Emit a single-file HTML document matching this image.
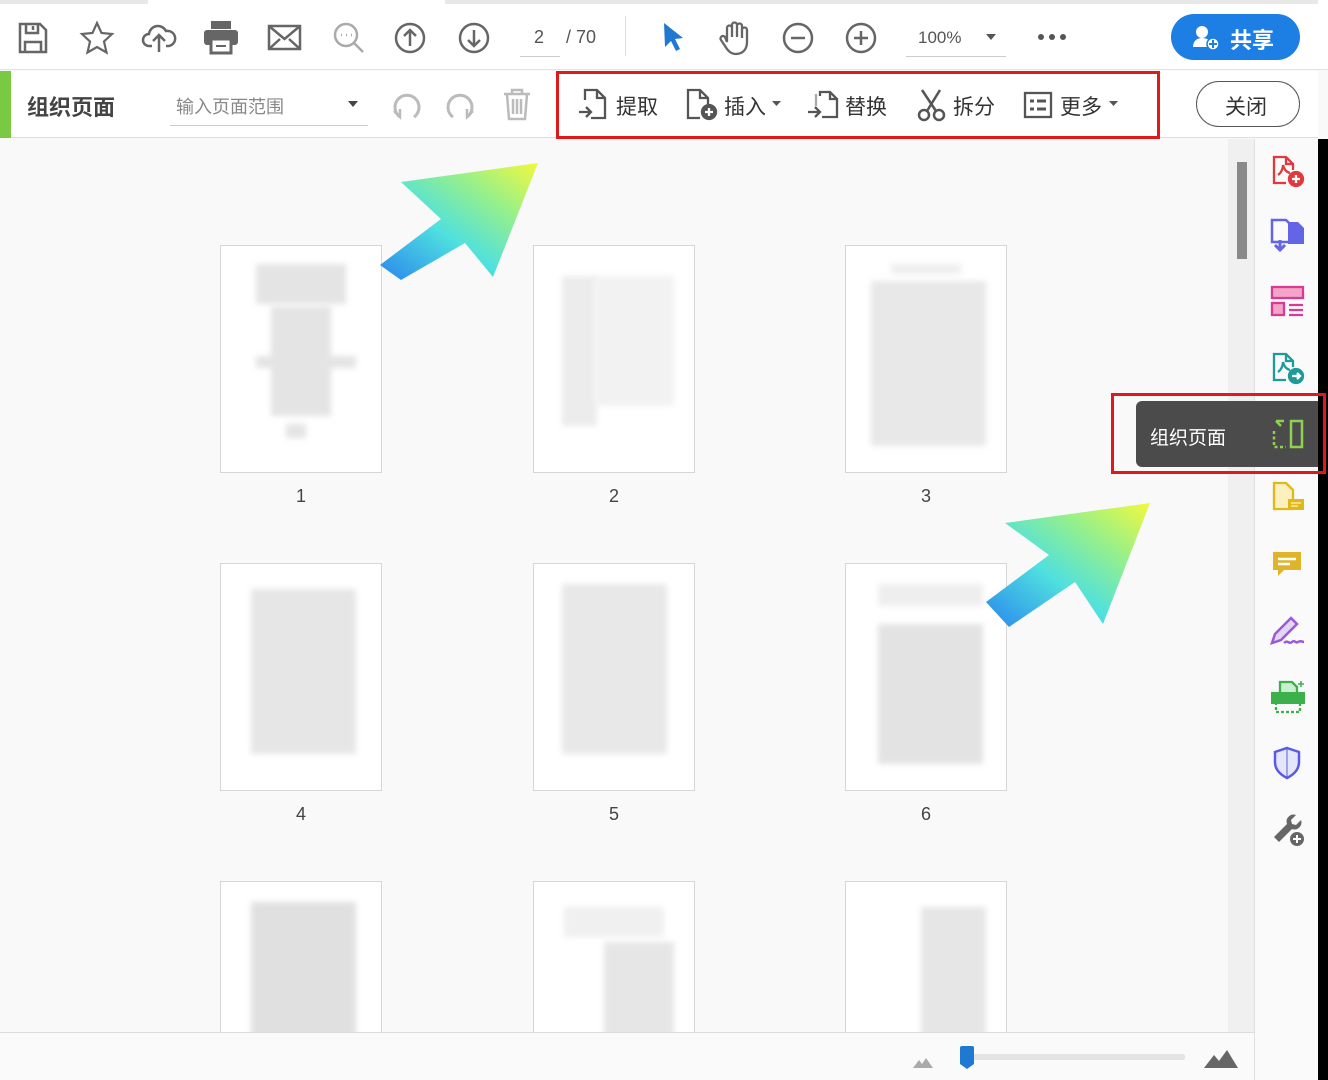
<!DOCTYPE html>
<html><head><meta charset="utf-8"><style>
*{margin:0;padding:0;box-sizing:border-box}
html,body{width:1328px;height:1080px;overflow:hidden}
body{background:#f9f9f9;font-family:"Liberation Sans","Noto Sans CJK SC",sans-serif;position:relative;color:#444}
.abs{position:absolute}
.tb{left:0;top:0;width:1328px;height:70px;background:#fff;border-bottom:1px solid #e2e2e2}
.bar2{left:0;top:71px;width:1318px;height:67px;background:#fff;border-bottom:1px solid #ddd}
.thumb{position:absolute;width:162px;height:228px;background:#fff;border:1px solid #d6d6d6;overflow:hidden}
.lbl{position:absolute;width:162px;text-align:center;font-size:18px;color:#444}
.blk{position:absolute;background:#e4e4e4;filter:blur(3px)}
.red{position:absolute;border:3px solid #e0191c}
svg{position:absolute;overflow:visible}
.t{position:absolute;font-size:20px;color:#333}
#content{position:absolute;left:0;top:0;width:1228px;height:1032px;overflow:hidden}
</style></head><body>
<div id="content">
<div class="thumb" style="left:220px;top:245px"><div class="blk" style="left:35px;top:18px;width:90px;height:40px"></div><div class="blk" style="left:50px;top:60px;width:60px;height:110px"></div><div class="blk" style="left:35px;top:110px;width:100px;height:12px"></div><div class="blk" style="left:65px;top:178px;width:20px;height:14px"></div></div>
<div class="thumb" style="left:533px;top:245px"><div class="blk" style="left:28px;top:30px;width:35px;height:150px;background:#ececec"></div><div class="blk" style="left:60px;top:30px;width:80px;height:130px;background:#f2f2f2"></div></div>
<div class="thumb" style="left:845px;top:245px"><div class="blk" style="left:25px;top:35px;width:115px;height:165px;background:#e8e8e8"></div><div class="blk" style="left:45px;top:18px;width:70px;height:10px;background:#eee"></div></div>
<div class="lbl" style="left:220px;top:486px">1</div><div class="lbl" style="left:533px;top:486px">2</div><div class="lbl" style="left:845px;top:486px">3</div>
<div class="thumb" style="left:220px;top:563px"><div class="blk" style="left:30px;top:25px;width:105px;height:165px;background:#e6e6e6"></div></div>
<div class="thumb" style="left:533px;top:563px"><div class="blk" style="left:28px;top:20px;width:105px;height:170px;background:#e8e8e8"></div></div>
<div class="thumb" style="left:845px;top:563px"><div class="blk" style="left:32px;top:20px;width:105px;height:22px;background:#eee"></div><div class="blk" style="left:32px;top:60px;width:105px;height:140px;background:#e3e3e3"></div></div>
<div class="lbl" style="left:220px;top:804px">4</div><div class="lbl" style="left:533px;top:804px">5</div><div class="lbl" style="left:845px;top:804px">6</div>
<div class="thumb" style="left:220px;top:881px"><div class="blk" style="left:30px;top:20px;width:105px;height:140px;background:#e0e0e0"></div></div>
<div class="thumb" style="left:533px;top:881px"><div class="blk" style="left:70px;top:60px;width:70px;height:100px;background:#e6e6e6"></div><div class="blk" style="left:30px;top:25px;width:100px;height:30px;background:#f0f0f0"></div></div>
<div class="thumb" style="left:845px;top:881px"><div class="blk" style="left:75px;top:25px;width:65px;height:130px;background:#e6e6e6"></div></div>
</div>

<div class="abs tb"></div>
<div class="abs" style="left:0;top:0;width:148px;height:4px;background:#e8e8e8"></div>
<div class="abs" style="left:445px;top:0;width:873px;height:4px;background:#e8e8e8"></div>
<svg style="left:18px;top:22px" width="30" height="32" fill="none" stroke="#666" stroke-width="2.5"><path d="M2 2h20l6 6v22H2z"/><path d="M8 2v9h12V2M15 4v4M7 30V20h16v10"/></svg>
<svg style="left:80px;top:21px" width="34" height="34" fill="none" stroke="#666" stroke-width="2.2"><path d="M17 2l4.5 10 10.5 1-8 7.5 2.5 11L17 26l-9.5 5.5 2.5-11L2 13l10.5-1z"/></svg>
<svg style="left:142px;top:22px" width="34" height="32" fill="none" stroke="#666" stroke-width="2.5"><path d="M10 24H7a6 6 0 0 1 0-12 9 9 0 0 1 17-3 7 7 0 0 1 3 15h-3M17 30V14M11 19l6-6 6 6"/></svg>
<svg style="left:204px;top:21px" width="34" height="32" fill="#666"><rect x="7" y="0" width="20" height="8"/><rect x="0" y="9" width="34" height="15" rx="3"/><rect x="7" y="18" width="20" height="14" fill="#fff" stroke="#666" stroke-width="3"/><rect x="12" y="24" width="10" height="2"/></svg>
<svg style="left:268px;top:25px" width="34" height="26" fill="none" stroke="#666" stroke-width="2.5"><rect x="1" y="1" width="31" height="23"/><path d="M1 1l15.5 13L32 1M1 24l11-10M32 24L21 14"/></svg>
<svg style="left:332px;top:21px" width="34" height="34" fill="none" stroke="#aaa" stroke-width="2.5"><circle cx="14" cy="14" r="11"/><path d="M22 22l9 9"/><path d="M9 14h1M14 14h1M19 14h1" stroke-width="2.5"/></svg>
<svg style="left:394px;top:22px" width="32" height="32" fill="none" stroke="#666" stroke-width="2.5"><circle cx="16" cy="16" r="14"/><path d="M16 24V9M10 14l6-6 6 6"/></svg>
<svg style="left:458px;top:22px" width="32" height="32" fill="none" stroke="#666" stroke-width="2.5"><circle cx="16" cy="16" r="14"/><path d="M16 8v15M10 18l6 6 6-6"/></svg>
<div class="t" style="left:534px;top:27px;font-size:18px;color:#555">2</div>
<div class="abs" style="left:520px;top:56px;width:40px;height:1px;background:#ccc"></div>
<div class="t" style="left:566px;top:27px;font-size:18px;color:#555">/ 70</div>
<div class="abs" style="left:625px;top:16px;width:1px;height:40px;background:#ddd"></div>
<svg style="left:663px;top:22px" width="22" height="30" fill="#1f78d1"><path d="M1 1l19 15-8 1 5 10-4 2-5-10-6 6z"/></svg>
<svg style="left:718px;top:20px" width="34" height="36" fill="none" stroke="#666" stroke-width="2.3"><path d="M9 22V8a2.5 2.5 0 0 1 5 0v9V5a2.5 2.5 0 0 1 5 0v12V6a2.5 2.5 0 0 1 5 0v12V10a2.5 2.5 0 0 1 5 0v12c0 7-4 12-11 12-5 0-8-3-11-8l-4-6a2.5 2.5 0 0 1 4-3z"/></svg>
<svg style="left:782px;top:22px" width="32" height="32" fill="none" stroke="#666" stroke-width="2.5"><circle cx="16" cy="16" r="14"/><path d="M9 16h14"/></svg>
<svg style="left:845px;top:22px" width="32" height="32" fill="none" stroke="#666" stroke-width="2.5"><circle cx="16" cy="16" r="14"/><path d="M9 16h14M16 9v14"/></svg>
<div class="t" style="left:918px;top:28px;font-size:17px;color:#555">100%</div>
<div class="abs" style="left:906px;top:56px;width:100px;height:1px;background:#ccc"></div>
<svg style="left:986px;top:34px" width="10" height="6" fill="#555"><path d="M0 0h10L5 6z"/></svg>
<svg style="left:1038px;top:34px" width="30" height="6" fill="#555"><circle cx="3" cy="3" r="3"/><circle cx="14" cy="3" r="3"/><circle cx="25" cy="3" r="3"/></svg>
<div class="abs" style="left:1171px;top:14px;width:129px;height:46px;border-radius:23px;background:#1d7ee4"></div>
<svg style="left:1193px;top:25px" width="28" height="26" fill="#fff"><circle cx="9" cy="7" r="6"/><path d="M0 22c0-6 4-9 9-9s7 2 8 4v5z"/><circle cx="20" cy="19" r="6" stroke="#1d7ee4" stroke-width="1.5"/><path d="M20 15v8M16 19h8" stroke="#1d7ee4" stroke-width="2"/></svg>
<div class="t" style="left:1230px;top:23px;font-size:22px;color:#fff;font-weight:bold">共享</div>

<div class="abs bar2"></div>
<div class="abs" style="left:0;top:71px;width:11px;height:67px;background:#7ac943"></div>
<div class="t" style="left:27px;top:90px;font-size:22px;font-weight:bold;color:#444">组织页面</div>
<div class="t" style="left:176px;top:93px;font-size:18px;color:#888">输入页面范围</div>
<div class="abs" style="left:170px;top:125px;width:198px;height:1px;background:#ccc"></div>
<svg style="left:348px;top:101px" width="10" height="6" fill="#444"><path d="M0 0h10L5 6z"/></svg>
<svg style="left:390px;top:89px" width="32" height="32" fill="none" stroke="#bbb" stroke-width="3"><path d="M10 28a12 12 0 1 1 14 0"/><path d="M4 22l6 6 0-8" stroke-width="2.5"/></svg>
<svg style="left:445px;top:89px" width="32" height="32" fill="none" stroke="#bbb" stroke-width="3"><path d="M22 28a12 12 0 1 0-14 0"/><path d="M28 22l-6 6 0-8" stroke-width="2.5"/></svg>
<svg style="left:503px;top:88px" width="28" height="32" fill="none" stroke="#bbb" stroke-width="2.5"><path d="M1 6h26M9 6V2h10v4M4 6l2 25h16l2-25M10 11v15M14 11v15M18 11v15"/></svg>
<svg style="left:577px;top:88px" width="30" height="32" fill="none" stroke="#555" stroke-width="2.3"><path d="M8 12V2h12l8 8v20H14"/><path d="M20 2v8h8M2 24h12M9 19l5 5-5 5"/></svg>
<div class="t" style="left:616px;top:91px;font-size:21px">提取</div>
<svg style="left:686px;top:88px" width="34" height="34" fill="none" stroke="#555" stroke-width="2.3"><path d="M14 30H2V2h12l8 8v6M14 2v8h8"/><circle cx="23" cy="24" r="7" fill="#555"/><path d="M23 20v8M19 24h8" stroke="#fff"/></svg>
<div class="t" style="left:724px;top:91px;font-size:21px">插入</div>
<svg style="left:772px;top:101px" width="9" height="5" fill="#555"><path d="M0 0h9L4.5 5z"/></svg>
<svg style="left:806px;top:88px" width="34" height="34" fill="none" stroke="#555" stroke-width="2.3"><path d="M14 8V4h10l7 7v18H16"/><path d="M24 4v7h7" /><path d="M10 6v12" stroke="#aaa"/><path d="M2 24h12M9 19l5 5-5 5"/></svg>
<div class="t" style="left:845px;top:91px;font-size:21px">替换</div>
<svg style="left:916px;top:88px" width="32" height="34" fill="none" stroke="#555" stroke-width="2.5"><circle cx="8" cy="27" r="5"/><circle cx="23" cy="27" r="5"/><path d="M11 23L24 2M20 23L6 2"/></svg>
<div class="t" style="left:953px;top:91px;font-size:21px">拆分</div>
<svg style="left:1024px;top:92px" width="28" height="26" fill="none" stroke="#555" stroke-width="2.3"><rect x="1" y="1" width="26" height="24"/><path d="M6 9h4M6 17h4M13 9h9M13 17h9" stroke-width="3"/></svg>
<div class="t" style="left:1060px;top:91px;font-size:21px">更多</div>
<svg style="left:1109px;top:101px" width="9" height="5" fill="#555"><path d="M0 0h9L4.5 5z"/></svg>
<div class="red" style="left:556px;top:71px;width:604px;height:68px"></div>
<div class="abs" style="left:1196px;top:81px;width:104px;height:46px;border:1.5px solid #555;border-radius:23px"></div>
<div class="t" style="left:1225px;top:91px;font-size:21px">关闭</div>

<svg style="left:0;top:0" width="1328" height="1080">
<defs><linearGradient id="g" x1="0" y1="1" x2="1" y2="0"><stop offset="0" stop-color="#2a86ee"/><stop offset="0.4" stop-color="#4fe0df"/><stop offset="0.7" stop-color="#97f08a"/><stop offset="1" stop-color="#f2f93c"/></linearGradient></defs>
<polygon fill="url(#g)" points="986,602 1049,555 1005,523 1150,503 1103,624 1075,582 1009,627"/>
<polygon fill="url(#g)" points="380,265 441,219 401,182 538,163 493,277 465,243 401,280"/>
</svg>

<div class="abs" style="left:1228px;top:139px;width:26px;height:893px;background:#f0f0f0"></div>
<div class="abs" style="left:1237px;top:162px;width:10px;height:97px;background:#8a8a8a"></div>
<div class="abs" style="left:1254px;top:139px;width:64px;height:941px;background:#fafafa;border-left:1px solid #e0e0e0"></div>
<div class="abs" style="left:1318px;top:139px;width:10px;height:941px;background:#000"></div>
<svg style="left:1272px;top:155px" width="34" height="34" fill="none" stroke="#e0393e" stroke-width="2.3"><path d="M14 28H2V2h12l7 7v6M14 2v7h7M6 20c3-2 5-6 5-10 1 4 3 7 7 8"/><circle cx="24" cy="24" r="7" fill="#e0393e"/><path d="M24 20v8M20 24h8" stroke="#fff"/></svg>
<svg style="left:1270px;top:218px" width="36" height="36"><path d="M2 2h14l4 4v18H2z" fill="none" stroke="#6464e6" stroke-width="2.5"/><path d="M18 4h10l6 6v16H18z" fill="#6464e6"/><path d="M10 22v10M5 27l5 5 5-5" stroke="#6464e6" stroke-width="3" fill="none"/></svg>
<svg style="left:1271px;top:285px" width="34" height="34" fill="#f2a5c8" stroke="#d93a96" stroke-width="2.3"><rect x="1" y="2" width="31" height="11"/><rect x="1" y="18" width="12" height="12"/><path d="M18 20h14M18 25h14M18 30h14" fill="none"/></svg>
<svg style="left:1272px;top:352px" width="34" height="34" fill="none" stroke="#1f9a9a" stroke-width="2.3"><path d="M14 28H2V2h12l7 7v6M14 2v7h7M6 20c3-2 5-6 5-10 1 4 3 7 7 8"/><circle cx="24" cy="24" r="7" fill="#1f9a9a"/><path d="M20 24h8M25 21l3 3-3 3" stroke="#fff"/></svg>
<div class="abs" style="left:1136px;top:401px;width:182px;height:66px;background:#4b4b4b;border-radius:6px 0 0 6px"></div>
<div class="t" style="left:1150px;top:423px;font-size:19px;color:#fff">组织页面</div>
<svg style="left:1272px;top:419px" width="32" height="30" fill="none" stroke="#8fd14f" stroke-width="2.5"><path d="M2 12v16h12" stroke-dasharray="3 2.5"/><path d="M12 2L4 2M4 2l5 5" /><rect x="19" y="2" width="11" height="26"/></svg>
<div class="red" style="left:1111px;top:393px;width:215px;height:81px"></div>
<svg style="left:1272px;top:481px" width="34" height="34"><path d="M2 2h12l7 7v19H2z" fill="#fdf0c0" stroke="#e0b818" stroke-width="2.3"/><rect x="16" y="18" width="16" height="11" fill="#e0b818"/><path d="M19 22h10M19 25h7" stroke="#fff"/></svg>
<svg style="left:1272px;top:550px" width="30" height="30"><path d="M1 2h28v18H12l-6 6v-6H1z" fill="#e0b42a"/><path d="M6 9h18M6 14h12" stroke="#fff" stroke-width="2.5"/></svg>
<svg style="left:1270px;top:615px" width="36" height="32" fill="none" stroke="#9b59d8" stroke-width="2.5"><path d="M2 28l3-9L21 3l6 6-16 16z" fill="#e5d5f5"/><path d="M14 28c4-4 5 2 8-1s3 2 6 0 4 0 6 0"/></svg>
<svg style="left:1270px;top:680px" width="36" height="34"><path d="M10 2h12l5 5v8H10z" fill="#c8efcf" stroke="#3cb04a" stroke-width="2.3"/><rect x="1" y="12" width="34" height="12" fill="#3cb04a"/><path d="M6 22v10h24V22" fill="none" stroke="#3cb04a" stroke-width="2.3" stroke-dasharray="3 2"/><path d="M31 1v6M28 4h6" stroke="#3cb04a" stroke-width="1.5"/></svg>
<svg style="left:1273px;top:746px" width="28" height="34"><path d="M14 2l12 4v10c0 8-6 13-12 16C8 29 2 24 2 16V6z" fill="#e6e6fb" stroke="#5a5ae6" stroke-width="2.5"/><path d="M14 2v30" stroke="#5a5ae6" stroke-width="1"/></svg>
<svg style="left:1271px;top:812px" width="36" height="36"><path d="M3 25L16 12a7 7 0 0 1 9-9l-5 5 1 4 4 1 5-5a7 7 0 0 1-9 9L8 30z" fill="#666"/><circle cx="26" cy="27" r="8" fill="#666" stroke="#fafafa" stroke-width="2"/><path d="M26 23v8M22 27h8" stroke="#fff" stroke-width="2"/></svg>

<div class="abs" style="left:0;top:1032px;width:1254px;height:48px;background:#fafafa;border-top:1px solid #ddd"></div>
<svg style="left:913px;top:1056px" width="20" height="12" fill="#aaa"><path d="M0 12l6-8 3 4 4-6 7 10z"/></svg>
<div class="abs" style="left:965px;top:1054px;width:220px;height:6px;background:#e4e4e4;border-radius:2px"></div>
<svg style="left:960px;top:1046px" width="14" height="24" fill="#1f78d1"><path d="M0 2a2 2 0 0 1 2-2h10a2 2 0 0 1 2 2v16l-7 5-7-5z"/></svg>
<svg style="left:1204px;top:1050px" width="34" height="18" fill="#666"><path d="M0 18l10-13 5 6 8-11 11 18z"/></svg>
</body></html>
